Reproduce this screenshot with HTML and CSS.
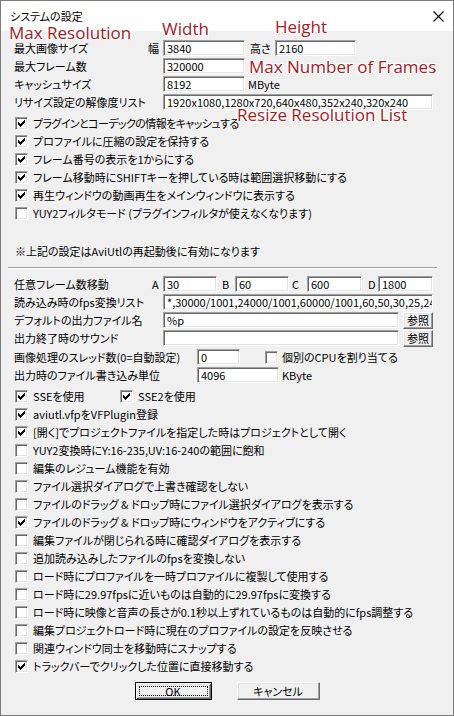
FILE: index.html
```html
<!DOCTYPE html>
<html lang="ja">
<head>
<meta charset="utf-8">
<title>システムの設定</title>
<link rel="stylesheet" href="styles.css">
</head>
<body>
<div class="window">
  <div class="titlebar">
    <span class="title">システムの設定</span>
    <svg class="close" width="11" height="11" viewBox="0 0 11 11"><path d="M0.5 0.5 L10.5 10.5 M10.5 0.5 L0.5 10.5" stroke="#000" stroke-width="1.1" fill="none"/></svg>
  </div>
  <div class="body">
    <div class="row">
      <span class="lbl w134">最大画像サイズ</span>
      <span class="pre w15 r">幅</span>
      <span class="field w82">3840</span>
      <span class="pre w25 ml5">高さ</span>
      <span class="field w81">2160</span>
    </div>
    <div class="row">
      <span class="lbl w149">最大フレーム数</span>
      <span class="field w82">320000</span>
    </div>
    <div class="row">
      <span class="lbl w149">キャッシュサイズ</span>
      <span class="field w82">8192</span>
      <span class="unit">MByte</span>
    </div>
    <div class="row">
      <span class="lbl w149">リサイズ設定の解像度リスト</span>
      <span class="field w270">1920x1080,1280x720,640x480,352x240,320x240</span>
    </div>

    <div class="checks first">
      <div class="row"><span class="cb on"></span><span class="tight">プラグインとコーデックの情報をキャッシュする</span></div>
      <div class="row"><span class="cb on"></span><span>プロファイルに圧縮の設定を保持する</span></div>
      <div class="row"><span class="cb on"></span><span>フレーム番号の表示を1からにする</span></div>
      <div class="row"><span class="cb on"></span><span>フレーム移動時にSHIFTキーを押している時は範囲選択移動にする</span></div>
      <div class="row"><span class="cb on"></span><span>再生ウィンドウの動画再生をメインウィンドウに表示する</span></div>
      <div class="row"><span class="cb"></span><span>YUY2フィルタモード (プラグインフィルタが使えなくなります)</span></div>
    </div>

    <div class="row note">※上記の設定はAviUtlの再起動後に有効になります</div>
    <div class="sep"></div>

    <div class="sec2">
      <div class="row">
        <span class="lbl w134">任意フレーム数移動</span>
        <span class="pre w15 pl4">A</span>
        <span class="field w54">30</span>
        <span class="pre w18 pl5">B</span>
        <span class="field w54">60</span>
        <span class="pre w18 pl3">C</span>
        <span class="field w55">600</span>
        <span class="pre w16 pl6">D</span>
        <span class="field w55">1800</span>
      </div>
      <div class="row">
        <span class="lbl w149">読み込み時のfps変換リスト</span>
        <span class="field w270">*,30000/1001,24000/1001,60000/1001,60,50,30,25,24,20,15,12,10</span>
      </div>
      <div class="row">
        <span class="lbl w149">デフォルトの出力ファイル名</span>
        <span class="field w236">%p</span>
        <span class="btn small">参照</span>
      </div>
      <div class="row">
        <span class="lbl w149">出力終了時のサウンド</span>
        <span class="field w236"></span>
        <span class="btn small">参照</span>
      </div>
      <div class="row mt1">
        <span class="lbl w183">画像処理のスレッド数(0=自動設定)</span>
        <span class="field w43">0</span>
        <span class="cb ml25"></span><span>個別のCPUを割り当てる</span>
      </div>
      <div class="row">
        <span class="lbl w183">出力時のファイル書き込み単位</span>
        <span class="field w82">4096</span>
        <span class="unit ml5">KByte</span>
      </div>
    </div>

    <div class="checks second">
      <div class="row">
        <span class="cbitem"><span class="cb on"></span><span>SSEを使用</span></span>
        <span class="cb on"></span><span>SSE2を使用</span>
      </div>
      <div class="row"><span class="cb on"></span><span>aviutl.vfpをVFPlugin登録</span></div>
      <div class="row"><span class="cb on"></span><span>[開く]でプロジェクトファイルを指定した時はプロジェクトとして開く</span></div>
      <div class="row"><span class="cb"></span><span>YUY2変換時にY:16-235,UV:16-240の範囲に飽和</span></div>
      <div class="row"><span class="cb"></span><span>編集のレジューム機能を有効</span></div>
      <div class="row"><span class="cb"></span><span>ファイル選択ダイアログで上書き確認をしない</span></div>
      <div class="row"><span class="cb"></span><span>ファイルのドラッグ &amp; ドロップ時にファイル選択ダイアログを表示する</span></div>
      <div class="row"><span class="cb on"></span><span>ファイルのドラッグ &amp; ドロップ時にウィンドウをアクティブにする</span></div>
      <div class="row"><span class="cb"></span><span>編集ファイルが閉じられる時に確認ダイアログを表示する</span></div>
      <div class="row"><span class="cb"></span><span>追加読み込みしたファイルのfpsを変換しない</span></div>
      <div class="row"><span class="cb"></span><span>ロード時にプロファイルを一時プロファイルに複製して使用する</span></div>
      <div class="row"><span class="cb"></span><span>ロード時に29.97fpsに近いものは自動的に29.97fpsに変換する</span></div>
      <div class="row"><span class="cb"></span><span>ロード時に映像と音声の長さが0.1秒以上ずれているものは自動的にfps調整する</span></div>
      <div class="row"><span class="cb"></span><span>編集プロジェクトロード時に現在のプロファイルの設定を反映させる</span></div>
      <div class="row"><span class="cb"></span><span>関連ウィンドウ同士を移動時にスナップする</span></div>
      <div class="row"><span class="cb on"></span><span>トラックバーでクリックした位置に直接移動する</span></div>
    </div>

    <div class="btns">
      <span class="btn default"><span class="focus">OK</span></span>
      <span class="btn cancel">キャンセル</span>
    </div>
  </div>

  <span class="anno a-maxres">Max Resolution</span>
  <span class="anno a-width">Width</span>
  <span class="anno a-height">Height</span>
  <span class="anno a-frames">Max Number of Frames</span>
  <span class="anno a-resize">Resize Resolution List</span>
</div>
</body>
</html>
```
FILE: styles.css
```css
* { box-sizing: border-box; }
html, body { margin: 0; padding: 0; }
body {
  width: 454px;
  height: 716px;
  overflow: hidden;
  background: #ffffff;
  font-family: "Noto Sans CJK JP", "Liberation Sans", sans-serif;
  font-size: 11px;
  font-feature-settings: "palt" 1;
  color: #000;
}
.window {
  position: relative;
  width: 454px;
  height: 716px;
  border: 1px solid #7a7a7a;
  display: flex;
  flex-direction: column;
}
.titlebar {
  height: 30px;
  flex: none;
  background: #fff;
  display: flex;
  align-items: center;
  justify-content: space-between;
  padding: 0 9px 0 9px;
}
.title { font-size: 11px; line-height: 14px; }
.close { display: block; }
.body {
  flex: 1;
  background: #f0f0f0;
  padding: 8px 13px 0 13px;
  display: flex;
  flex-direction: column;
}
.row {
  display: flex;
  align-items: center;
  height: 18px;
  flex: none;
  white-space: nowrap;
  line-height: 14px;
}
.tight { letter-spacing: -0.6px; }
.lbl { flex: none; }
.w134 { width: 134px; }
.w149 { width: 149px; }
.w183 { width: 183px; }
.pre { flex: none; }
.w15 { width: 15px; }
.w16 { width: 16px; }
.w18 { width: 18px; }
.w25 { width: 25px; }
.r { text-align: left; padding-left: 0; }
.pl3 { padding-left: 3px; }
.pl4 { padding-left: 4px; }
.pl5 { padding-left: 5px; }
.pl6 { padding-left: 6px; }
.ml5 { margin-left: 5px; }
.ml25 { margin-left: 25px; }
.mt1 { margin-top: 1px; }

.field {
  flex: none;
  height: 16px;
  background: #fff;
  border: 1px solid;
  border-color: #a0a0a0 #ffffff #ffffff #a0a0a0;
  box-shadow: inset 1px 1px #696969, inset -1px -1px #e3e3e3;
  padding: 0 2px 0 3px;
  line-height: 14px;
  overflow: hidden;
  white-space: nowrap;
}
.w43 { width: 43px; }
.w54 { width: 54px; }
.w55 { width: 55px; }
.w81 { width: 81px; }
.w82 { width: 82px; }
.w236 { width: 236px; }
.w270 { width: 270px; }
.unit { margin-left: 3px; }

.checks.first { margin-top: 3px; }
.checks.second { margin-top: 3px; }
.cb {
  flex: none;
  width: 13px;
  height: 13px;
  margin-left: 1px;
  margin-right: 5px;
  background: #fff;
  border: 1px solid;
  border-color: #a0a0a0 #ffffff #ffffff #a0a0a0;
  box-shadow: inset 1px 1px #696969, inset -1px -1px #e3e3e3;
  position: relative;
}
.cb.ml25 { margin-left: 25px; margin-right: 4px; }
.cb.on::after {
  content: "";
  position: absolute;
  left: 2px;
  top: 2px;
  width: 7px;
  height: 7px;
  background:
    linear-gradient(#000, #000) 6px 0 / 1px 3px no-repeat,
    linear-gradient(#000, #000) 5px 1px / 1px 3px no-repeat,
    linear-gradient(#000, #000) 4px 2px / 1px 3px no-repeat,
    linear-gradient(#000, #000) 3px 3px / 1px 3px no-repeat,
    linear-gradient(#000, #000) 2px 4px / 1px 3px no-repeat,
    linear-gradient(#000, #000) 1px 3px / 1px 3px no-repeat,
    linear-gradient(#000, #000) 0px 2px / 1px 3px no-repeat;
}
.cbitem { display: flex; align-items: center; width: 105px; flex: none; }

.note { margin-top: 20px; padding-left: 1px; }
.sep {
  flex: none;
  height: 2px;
  width: 429px;
  margin: 7px 0 0 -6px;
  border-top: 1px solid #a0a0a0;
  border-bottom: 1px solid #ffffff;
}
.sec2 { margin-top: 6px; display: flex; flex-direction: column; }

.btn {
  flex: none;
  display: flex;
  align-items: center;
  justify-content: center;
  background: #f0f0f0;
  border: 1px solid;
  border-color: #ffffff #696969 #696969 #ffffff;
  box-shadow: inset -1px -1px #a0a0a0, inset 1px 1px #e3e3e3;
  line-height: 14px;
}
.btn.small { width: 30px; height: 17px; margin-left: 4px; }
.btns {
  display: flex;
  justify-content: center;
  gap: 25px;
  margin-top: 7px;
}
.btn.default {
  width: 77px;
  height: 18px;
  border: 1px solid #000;
  box-shadow: inset 1px 1px #fff, inset -1px -1px #696969, inset 2px 2px #e3e3e3, inset -2px -2px #a0a0a0;
  padding: 3px;
}
.focus {
  flex: 1;
  align-self: stretch;
  display: flex;
  align-items: center;
  justify-content: center;
  border: 1px dotted #000;
}
.btn.cancel { width: 83px; height: 18px; }

.anno {
  position: absolute;
  font-family: "Open Sans", "Noto Sans", sans-serif;
  font-size: 17px;
  line-height: 13px;
  font-feature-settings: normal;
  color: #a3201f;
  white-space: nowrap;
  text-shadow: -1px 0 #fff, 1px 0 #fff, 0 -1px #fff, 0 1px #fff, -1px -1px #fff, 1px 1px #fff, 1px -1px #fff, -1px 1px #fff;
}
.a-maxres { left: 8px; top: 25px; }
.a-width { left: 161px; top: 21px; }
.a-height { left: 274px; top: 19px; }
.a-frames { left: 248px; top: 59px; }
.a-resize { left: 236px; top: 107px; }
```
